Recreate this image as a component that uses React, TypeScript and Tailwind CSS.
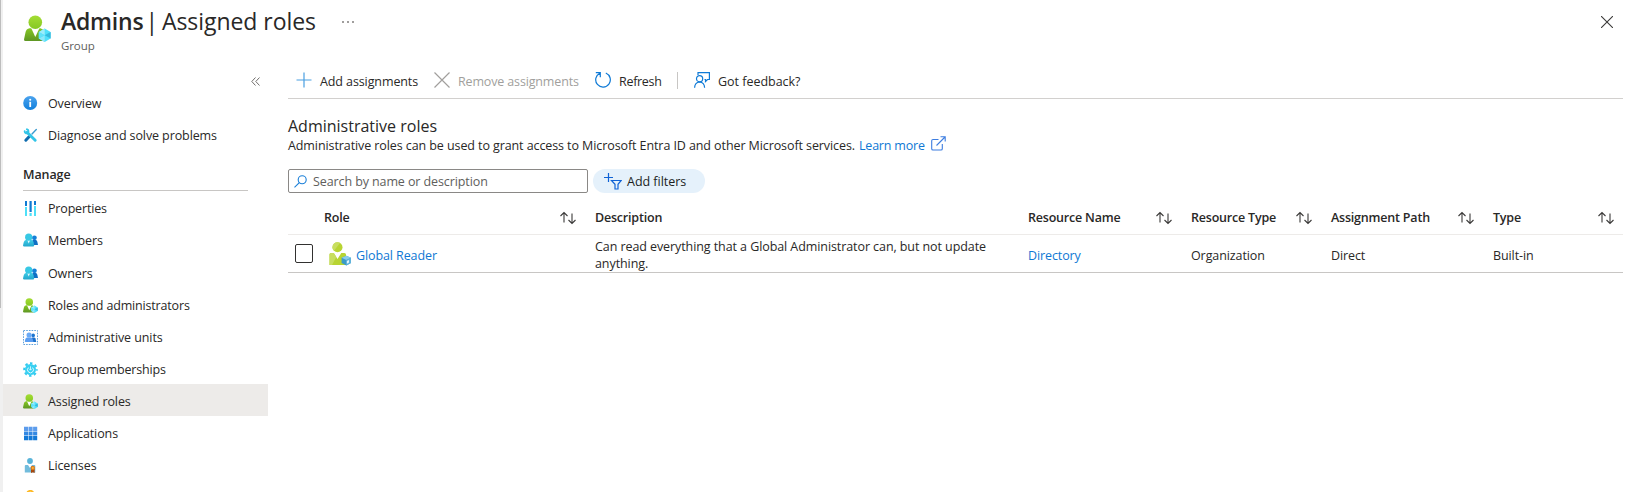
import type { ReactNode } from 'react';

function PersonCube({ className }: { className: string }) {
  return (
    <svg viewBox="0 0 27 27" className={className}>
      <defs>
        <linearGradient id="pc-green" x1="0" y1="0" x2="0" y2="1">
          <stop offset="0" stopColor="#86c823" />
          <stop offset="1" stopColor="#5e9624" />
        </linearGradient>
        <linearGradient id="pc-head" x1="0" y1="0" x2="0" y2="1">
          <stop offset="0" stopColor="#a4dd34" />
          <stop offset="1" stopColor="#86c823" />
        </linearGradient>
      </defs>
      <path d="M0 24.500 L1.600 17 Q2.200 14 5.500 13.200 H16.500 Q19.500 14 20 17 L21 26 H1.400 Q0 26 0 24.500Z" fill="url(#pc-green)" />
      <path d="M7.200 13 L11.300 22 L15.500 13Z" fill="#fff" />
      <circle cx="11.300" cy="7.200" r="6.800" fill="url(#pc-head)" />
      <path d="M20.700 13.600 L26.600 17 V23.600 L20.700 27 L14.800 23.600 V17Z" fill="#50e0fb" />
      <path d="M20.700 20.300 L20.700 13.600 L14.800 17Z" fill="#9cecfb" />
      <path d="M20.700 20.300 L26.600 17 V23.600Z" fill="#36b9dc" />
      <path d="M20.700 20.300 L14.800 23.600 L20.700 27Z" fill="#8fe8fa" />
      <path d="M20.700 20.300 L14.800 17 V23.600Z" fill="#60e2fa" />
    </svg>
  );
}

function RolePerson() {
  return (
    <svg viewBox="0 0 22 24" className="h-6 w-[22px]">
      <circle cx="8.500" cy="5.200" r="5" fill="#b8d432" />
      <path d="M8.500 0.200 A5 5 0 0 0 5 8.800 L11 1Z" fill="#c8de60" />
      <path d="M0.500 23 V12.500 Q0.500 11 2 11 H4.800 L8.500 17 L12.300 11 H15.300 Q17 11 17 12.500 V23Z" fill="#b8d432" />
      <path d="M0.500 23 V12.500 Q0.500 11 2 11 H4.800 L7.300 15 L3 23Z" fill="#c8de60" />
      <path d="M17.300 13.800 L22 15.800 V21 L17.300 23.500 L12.600 21 V15.800Z" fill="#3b9bc8" />
      <path d="M17.300 13.800 L22 15.800 L17.300 18 L12.600 15.800Z" fill="#8accec" />
      <path d="M17.300 18 L22 15.800 V21 L17.300 23.500Z" fill="#61b4dc" />
      <path d="M17.900 19 L20 18 V20.600 L17.900 21.700Z" fill="#e4f4fb" />
    </svg>
  );
}

function InfoIcon() {
  return (
    <svg viewBox="0 0 15 15" className="size-[15px]">
      <defs>
        <linearGradient id="info-g" x1="0" y1="0" x2="0" y2="1">
          <stop offset="0" stopColor="#4ba3ee" />
          <stop offset="1" stopColor="#1180dc" />
        </linearGradient>
      </defs>
      <circle cx="7.200" cy="7" r="7" fill="url(#info-g)" />
      <circle cx="7.200" cy="3.800" r="1.050" fill="#fff" />
      <path d="M6.300 5.800 H8.100 V11 H6.300Z" fill="#fff" />
    </svg>
  );
}

function ToolsIcon() {
  return (
    <svg viewBox="0 0 15 15" className="size-[15px]" fill="none" strokeLinecap="round">
      <path d="M13.300 1.600 L9 6" stroke="#3a9bd0" strokeWidth="1.400" />
      <path d="M6.300 8.500 L2.800 12.200" stroke="#0f6cae" strokeWidth="3" />
      <path d="M4 4.200 L12.200 12.300" stroke="#32c5e8" strokeWidth="2.900" />
      <path d="M1.700 3.300 Q2 5.800 4.600 5.300 Q6 4 5 2 L3.900 1.300" stroke="#32c5e8" strokeWidth="1.900" />
    </svg>
  );
}

function PropertiesIcon() {
  return (
    <svg viewBox="0 0 15 15" className="size-[15px]">
      <path d="M2 0 H4 V5 H2Z M6.500 0 H8.700 V11 H6.500Z M11 0 H13 V4 H11Z" fill="#0f7ad2" />
      <path d="M2 6 H4 V15 H2Z M6.500 12 H8.700 V15 H6.500Z M11 5 H13 V15 H11Z" fill="#4ee0f8" />
    </svg>
  );
}

function PeopleIcon() {
  return (
    <svg viewBox="0 0 15 15" className="size-[15px]">
      <defs>
        <linearGradient id="people-g" x1="0" y1="0" x2="0" y2="1">
          <stop offset="0" stopColor="#3fcbe6" />
          <stop offset="1" stopColor="#22a5cb" />
        </linearGradient>
      </defs>
      <circle cx="11.400" cy="4.800" r="2.400" fill="#1480d8" />
      <path d="M9 12 L9.500 7 H13 Q14.200 7.400 14.400 9 L15 12Z" fill="#1070c4" />
      <path d="M0 12.500 L0.800 9 Q1.200 7.500 2.800 7 H8.600 Q10.100 7.500 10.500 9 L11.200 12.500 Q11.200 13.600 10 13.600 H1.200 Q0 13.600 0 12.500Z" fill="url(#people-g)" />
      <path d="M4.300 7 L5.700 10.500 L7.200 7Z" fill="#e4f8fc" />
      <circle cx="5.700" cy="4.200" r="3.600" fill="#38c8e4" />
    </svg>
  );
}

function AdminUnitsIcon() {
  return (
    <svg viewBox="0 0 15 15" className="size-[15px]">
      <rect x="0.500" y="0.500" width="14" height="14" fill="none" stroke="#5ea0dc" strokeDasharray="1.600 1.100" />
      <circle cx="10.200" cy="5.400" r="1.800" fill="#1a74d0" />
      <path d="M8 12 L9 7.400 H11.300 Q12.200 7.600 12.500 8.600 L13.300 12Z" fill="#1a6fca" />
      <path d="M1.800 11.200 L2.400 9 Q2.800 7.800 4 7.500 H8 Q9.300 7.800 9.700 9 L10.500 12 H2.600 Q1.700 12 1.800 11.200Z" fill="#5a9ef2" />
      <circle cx="6.100" cy="5" r="2.600" fill="#6aaaf6" />
    </svg>
  );
}

function GearIcon() {
  return (
    <svg viewBox="0 0 15 15" className="size-[15px]" fill="none">
      <circle cx="7.500" cy="7.500" r="6.300" stroke="#32c8ee" strokeWidth="2" strokeDasharray="2.470 2.470" strokeDashoffset="1.230" />
      <circle cx="7.500" cy="7.500" r="5.500" fill="#36d0f2" />
      <path d="M5.400 5.600 A3 3 0 1 0 9.600 5.600" stroke="#e6fbff" strokeWidth="1" />
      <path d="M7.500 4.300 V8 M6.200 6.800 L7.500 8.200 L8.800 6.800" stroke="#e6fbff" strokeWidth="0.800" />
    </svg>
  );
}

function AppsIcon() {
  return (
    <svg viewBox="0 0 15 15" className="size-[15px]">
      <path d="M1 0.800 H5 V5 H1Z M5.500 0.800 H9.600 V5 H5.500Z M10.100 0.800 H14.200 V5 H10.100Z" fill="#5c9cec" />
      <path d="M1 5.500 H5 V9.600 H1Z M5.500 5.500 H9.600 V9.600 H5.500Z M10.100 5.500 H14.200 V9.600 H10.100Z" fill="#3388e2" />
      <path d="M1 10.100 H5 V14.200 H1Z M5.500 10.100 H9.600 V14.200 H5.500Z M10.100 10.100 H14.200 V14.200 H10.100Z" fill="#1278d6" />
    </svg>
  );
}

function LicenseIcon() {
  return (
    <svg viewBox="0 0 15 15" className="size-[15px]">
      <circle cx="7" cy="3" r="2.900" fill="#59b4d9" />
      <path d="M1.800 14.500 V8 Q1.800 7 2.800 7 H5 L7 10 L9 7 H11.300 Q12.300 7 12.300 8 V14.500Z" fill="#72bcdc" />
      <path d="M8 11 H11.600 V15 L9.800 14.200 L8 15Z" fill="#a8460c" />
      <circle cx="9.800" cy="10" r="2.200" fill="#e07a1a" />
      <circle cx="9.800" cy="10" r="1" fill="#fcb93c" />
    </svg>
  );
}

function KeyIcon() {
  return (
    <svg viewBox="0 0 15 15" className="size-[15px]" fill="none">
      <circle cx="7.200" cy="4" r="3.200" stroke="#fdb822" strokeWidth="1.800" />
      <path d="M7.200 8 V14" stroke="#fdb822" strokeWidth="2" />
    </svg>
  );
}

function SortIcon() {
  return (
    <svg viewBox="0 0 16 14" className="h-3.5 w-4 shrink-0" fill="none" stroke="#3b3a39" strokeWidth="1.100">
      <path d="M4 11.500 V1.800 M0.500 5 L4 1.500 L7.500 5" />
      <path d="M12 2.500 V12.200 M8.500 9 L12 12.500 L15.500 9" />
    </svg>
  );
}

type NavItemProps = { icon: ReactNode; label: string; active?: boolean; low?: boolean; tight?: boolean };

function NavItem({ icon, label, active, low, tight }: NavItemProps) {
  return (
    <div className={`flex h-8 items-center pl-5 ${active ? 'bg-[#edebe9]' : ''} ${low ? 'pt-0.5' : ''}`}>
      <span className="mr-2.5 flex size-[15px] shrink-0 items-center justify-center">{icon}</span>
      <span className={`whitespace-nowrap pt-0.5 ${tight ? 'tracking-[-0.17px]' : ''}`}>{label}</span>
    </div>
  );
}

function HeadCell({ label, end, unsorted }: { label: string; end?: boolean; unsorted?: boolean }) {
  return (
    <div className={end ? 'flex items-center justify-between pr-[9px]' : 'flex items-center justify-between pr-[19px]'}>
      <span className="whitespace-nowrap tracking-[-0.2px]">{label}</span>
      {!unsorted && <SortIcon />}
    </div>
  );
}

const columns = 'grid grid-cols-[36px_271px_433px_163px_140px_162px_1fr]';

export default function App() {
  return (
    <div className="flex h-[492px] w-[1640px] overflow-hidden bg-white font-['Open_Sans','Noto_Sans',sans-serif] text-[12.5px] leading-4 tracking-[-0.1px] text-[#292827]">
      <div className="h-full w-[3px] shrink-0 bg-[#f0f0f0]">
        <div className="h-[308px] w-px bg-[#bdbdbd]" />
      </div>
      <div className="flex min-w-0 flex-1 flex-col">
        <header className="flex h-[65px] shrink-0 justify-between">
          <div className="flex pl-[21px] pt-[7px]">
            <PersonCube className="mt-2 size-[27px]" />
            <div className="ml-2.5">
              <h1 className="flex h-7 items-center whitespace-nowrap text-[23px] leading-7 tracking-[-0.2px]">
                <span className="font-semibold">Admins</span>
                <span className="ml-0.5 mr-1">|</span>
                <span className="tracking-[-0.05px]">Assigned roles</span>
                <span className="ml-[26px] mt-0.5 flex gap-[3px]">
                  <i className="size-0.5 rounded-full bg-[#807e7c]" />
                  <i className="size-0.5 rounded-full bg-[#807e7c]" />
                  <i className="size-0.5 rounded-full bg-[#807e7c]" />
                </span>
              </h1>
              <p className="mt-[3px] text-[11.5px] text-[#605e5c]">Group</p>
            </div>
          </div>
          <svg viewBox="0 0 12 12" className="mr-[27px] mt-4 size-3" stroke="#3b3a39" strokeWidth="1.100">
            <path d="M0 0 L12 12 M12 0 L0 12" />
          </svg>
        </header>
        <div className="flex min-h-0 flex-1">
          <nav className="w-[265px] shrink-0">
            <div className="flex h-[22px] justify-end pr-2 pt-3">
              <svg viewBox="0 0 9 9" className="size-[9px]" fill="none" stroke="#706e6c">
                <path d="M4.500 0.500 L0.800 4.500 L4.500 8.500 M8.500 0.500 L4.800 4.500 L8.500 8.500" />
              </svg>
            </div>
            <NavItem icon={<InfoIcon />} label="Overview" />
            <NavItem icon={<ToolsIcon />} label="Diagnose and solve problems" />
            <div className="ml-5 mr-5 flex h-10 items-end border-b border-[#c8c6c4] pb-[7px] font-semibold">Manage</div>
            <div className="h-px" />
            <NavItem icon={<PropertiesIcon />} label="Properties" tight />
            <NavItem icon={<PeopleIcon />} label="Members" />
            <NavItem icon={<PeopleIcon />} label="Owners" low />
            <NavItem icon={<PersonCube className="size-[15px]" />} label="Roles and administrators" low tight />
            <NavItem icon={<AdminUnitsIcon />} label="Administrative units" low />
            <NavItem icon={<GearIcon />} label="Group memberships" low tight />
            <NavItem icon={<PersonCube className="size-[15px]" />} label="Assigned roles" active low />
            <NavItem icon={<AppsIcon />} label="Applications" low />
            <NavItem icon={<LicenseIcon />} label="Licenses" low />
            <NavItem icon={<KeyIcon />} label="" low />
          </nav>
          <main className="ml-5 mr-[17px] flex-1">
            <div className="flex h-[34px] items-center border-b border-[#d2d0ce] pb-[3px] pl-2">
              <svg viewBox="0 0 16 16" className="size-4" stroke="#4a9fe2" strokeWidth="1.200">
                <path d="M8 0.500 V15.500 M0.500 8 H15.500" />
              </svg>
              <span className="ml-2 w-[99px] whitespace-nowrap pt-[3px]">Add assignments</span>
              <svg viewBox="0 0 16 16" className="ml-[15px] size-4" stroke="#a19f9d" strokeWidth="1.200">
                <path d="M0.500 0.500 L15.500 15.500 M15.500 0.500 L0.500 15.500" />
              </svg>
              <span className="ml-2 w-[121px] whitespace-nowrap pt-[3px] tracking-[-0.15px] text-[#a19f9d]">Remove assignments</span>
              <svg viewBox="0 0 16 16" className="ml-4 size-4" fill="none" stroke="#0f7ad6" strokeWidth="1.200">
                <path d="M10.800 1 A7.300 7.300 0 1 1 4.800 1.200 M0.800 0.700 H5.300 V5.200" />
              </svg>
              <span className="ml-2 w-[42px] whitespace-nowrap pt-[3px] tracking-[-0.3px]">Refresh</span>
              <div className="ml-4 h-[17px] w-px bg-[#c8c6c4]" />
              <svg viewBox="0 0 16 16" className="ml-4 size-4" fill="none" stroke="#0f7ad6" strokeWidth="1.200">
                <path d="M4 3 V0.700 H15.400 V7.500 H13.500 L11.500 9.500 V7.500 H10.500" />
                <circle cx="5.600" cy="6.700" r="3.100" />
                <path d="M0.600 15.800 Q0.800 10.300 5.600 10 Q10.400 10.300 10.600 15.800" />
              </svg>
              <span className="ml-2 whitespace-nowrap pt-[3px] tracking-[-0.02px]">Got feedback?</span>
            </div>
            <h2 className="mt-[17px] text-base leading-5 tracking-normal">Administrative roles</h2>
            <p className="flex items-center whitespace-nowrap pt-0.5 tracking-[-0.09px]">
              Administrative roles can be used to grant access to Microsoft Entra ID and other Microsoft services.
              <a className="ml-1 tracking-[-0.2px] text-[#0f78d4]">Learn more</a>
              <svg viewBox="0 0 15 15" className="-mt-1.5 ml-[6px] size-[15px]" fill="none" stroke="#3d7de0" strokeWidth="1.100">
                <path d="M7.500 3.500 H2 Q0.700 3.500 0.700 4.800 V12.700 Q0.700 14 2 14 H10 Q11.300 14 11.300 12.700 V8" />
                <path d="M5.500 9.500 L14 1 M9.500 0.800 H14.200 V5.500" />
              </svg>
            </p>
            <div className="mt-[15px] flex h-6 gap-[5px]">
              <div className="flex w-[300px] items-center rounded-[2px] border border-[#8a8886] pl-[5px]">
                <svg viewBox="0 0 13 13" className="size-[13px]" fill="none" stroke="#1a7fd8" strokeWidth="1.100">
                  <circle cx="8.200" cy="4.700" r="4" />
                  <path d="M5.300 7.600 L0.500 12.400" />
                </svg>
                <span className="ml-1.5 whitespace-nowrap pt-px text-[#605e5c]">Search by name or description</span>
              </div>
              <div className="flex w-28 items-center rounded-full bg-[#e5f1fb] pl-[11px]">
                <svg viewBox="0 0 18 17" className="h-[17px] w-[18px]" fill="none" stroke="#0f62d6" strokeWidth="1.200">
                  <path d="M4.500 0 V9 M0 4.500 H9" />
                  <path d="M7.500 7.500 H17.200 L14 11.300 V16 H11 V11.300Z" />
                </svg>
                <span className="ml-[5px] whitespace-nowrap pt-px tracking-[-0.02px] text-[#201f1e]">Add filters</span>
              </div>
            </div>
            <div className={`${columns} mt-2.5 h-8 border-b border-[#edebe9] pb-0.5 font-semibold`}>
              <div />
              <HeadCell label="Role" />
              <HeadCell label="Description" unsorted />
              <HeadCell label="Resource Name" />
              <HeadCell label="Resource Type" />
              <HeadCell label="Assignment Path" />
              <HeadCell label="Type" end />
            </div>
            <div className={`${columns} h-[38px] items-center border-b border-[#c8c6c4]`}>
              <div className="ml-[7px] h-[19px] w-[18px] rounded-[2px] border border-[#323130]" />
              <div className="flex items-center pl-[5px]">
                <RolePerson />
                <a className="ml-[5px] pt-1 text-[#0f78d4]">Global Reader</a>
              </div>
              <div className="whitespace-nowrap pt-0.5 leading-[17px] tracking-[-0.08px]">
                Can read everything that a Global Administrator can, but not update
                <br />
                anything.
              </div>
              <a className="pt-1 text-[#0f78d4]">Directory</a>
              <span className="pt-1">Organization</span>
              <span className="pt-1">Direct</span>
              <span className="pt-1">Built-in</span>
            </div>
          </main>
        </div>
      </div>
    </div>
  );
}
